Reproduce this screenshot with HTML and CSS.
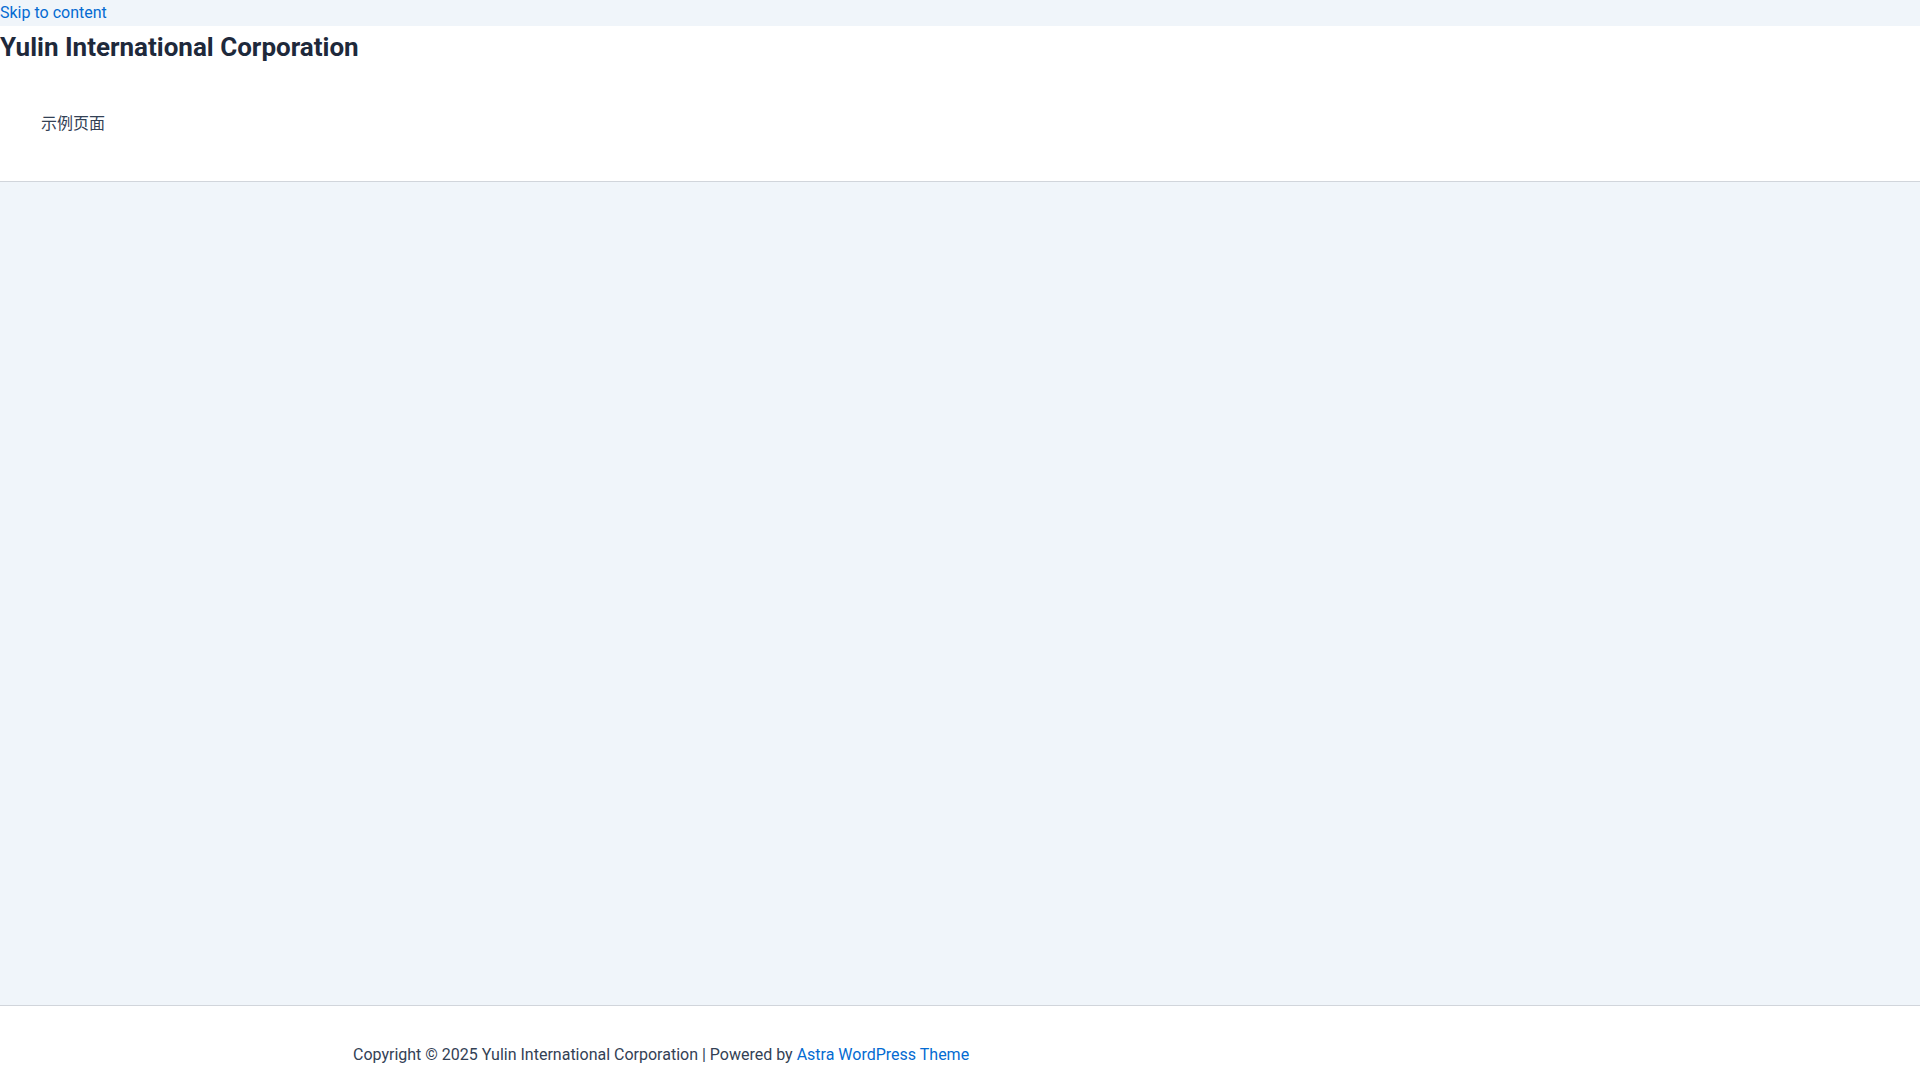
FILE: index.html
```html
<!DOCTYPE html>
<html lang="zh">
<head>
    <meta charset="UTF-8">
    <meta name="viewport" content="width=device-width, initial-scale=1.0">
    <title>Yulin International Corporation</title>
    <link rel="stylesheet" href="styles.css">
</head>
<body>
    <div class="skip-bar">
        <a class="skip-link" href="#content">Skip to content</a>
    </div>

    <header class="site-header">
        <p class="site-title">Yulin International Corporation</p>
        <nav class="main-nav">
            <ul class="menu">
                <li class="menu-item"><a href="#">示例页面</a></li>
            </ul>
        </nav>
    </header>

    <main id="content" class="site-content"></main>

    <footer class="site-footer">
        <div class="footer-inner">
            Copyright © 2025 Yulin International Corporation | Powered by <a href="#">Astra WordPress Theme</a>
        </div>
    </footer>
</body>
</html>
```

FILE: styles.css
```css
:root {
    --bg-color: #f0f5fa;
    --heading: #1e293b;
    --text-color: #334155;
    --link: #046bd2;
    --border-color: #d1d5db;
}

* {
    box-sizing: border-box;
    margin: 0;
    padding: 0;
}

body {
    font-family: Roboto, "Noto Sans CJK SC", sans-serif;
    font-size: 16px;
    color: var(--text-color);
    background: var(--bg-color);
}

a {
    color: var(--link);
    text-decoration: none;
}

/* skip link */
.skip-bar {
    height: 26px;
    line-height: 26px;
    background: var(--bg-color);
}

/* header */
.site-header {
    background: #fff;
    border-bottom: 1px solid var(--border-color);
}

.site-title {
    font-size: 26px;
    font-weight: 700;
    line-height: 42px;
    color: var(--heading);
}

.menu {
    list-style: none;
    padding: 44px 0 45px 41px;
}

.menu-item a {
    display: block;
    font-size: 16px;
    line-height: 24px;
    color: var(--text-color);
}

/* main */
.site-content {
    height: 823px;
    background: var(--bg-color);
}

/* footer */
.site-footer {
    background: #fff;
    border-top: 1px solid var(--border-color);
    padding: 37px 0 38px;
}

.footer-inner {
    width: 1240px;
    margin: 0 auto;
    padding: 0 13px;
    line-height: 24px;
}
```
